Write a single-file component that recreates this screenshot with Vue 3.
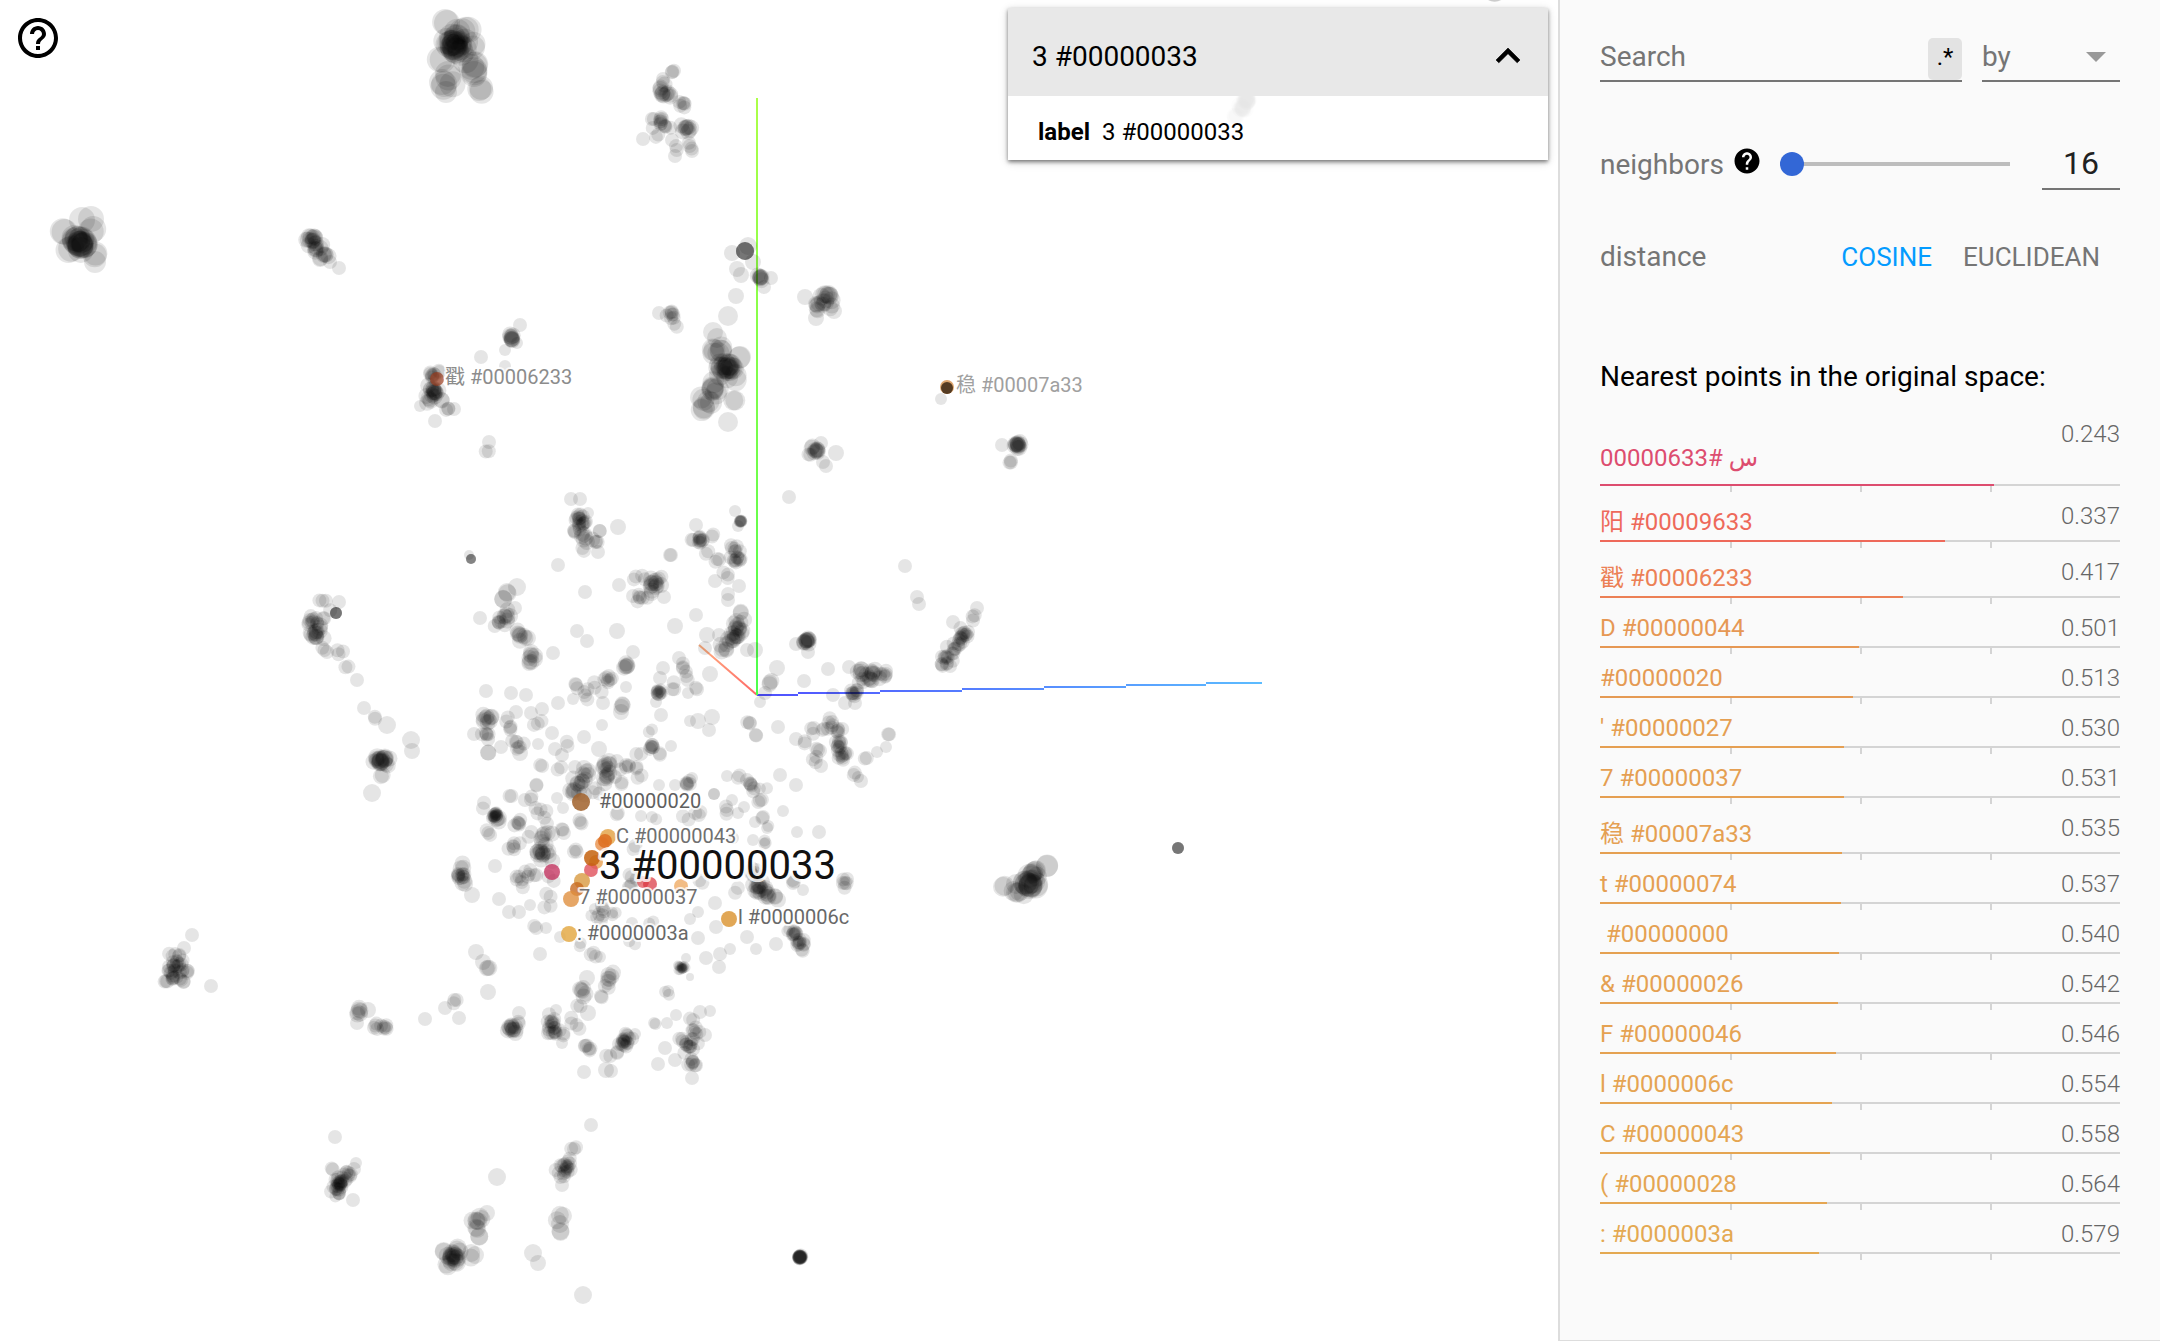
<script setup>
import { ref } from 'vue'

const pattern = ref('')
const neighborCount = ref(16)
const distance = ref('cosine')
const isOpen = ref(true)

const neighbors = [
  { label: 'س #00000633', value: 0.243, color: '#dd4d6f', script: 'arabic' },
  { label: '阳 #00009633', value: 0.337, color: '#ee695a', script: 'han' },
  { label: '戳 #00006233', value: 0.417, color: '#ec8055', script: 'han' },
  { label: 'D #00000044', value: 0.501, color: '#e69854' },
  { label: '#00000020', value: 0.513, color: '#e59a54' },
  { label: "' #00000027", value: 0.53, color: '#e59f52' },
  { label: '7 #00000037', value: 0.531, color: '#e59f52' },
  { label: '稳 #00007a33', value: 0.535, color: '#e5a052', script: 'han' },
  { label: 't #00000074', value: 0.537, color: '#e5a052' },
  { label: '\u00a0#00000000', value: 0.54, color: '#e5a152' },
  { label: '& #00000026', value: 0.542, color: '#e5a152' },
  { label: 'F #00000046', value: 0.546, color: '#e5a252' },
  { label: 'l #0000006c', value: 0.554, color: '#e5a452' },
  { label: 'C #00000043', value: 0.558, color: '#e5a552' },
  { label: '( #00000028', value: 0.564, color: '#e5a652' },
  { label: ': #0000003a', value: 0.579, color: '#e4a952' },
]

// Point groups of the projection: x y radius count spread
const groups = `
446 22 13 2 2;466 30 13 2 3;455 46 13 14 5;454 36 13 5 6;473 68 13 5 4;448 81 13 4 4;480 88 12 3 2;446 92 11 1 0;441 58 13 2 3;472 46 12 2 3;
673 73 7 3 2;661 80 7 2 2;665 92 8 9 4;682 105 7 4 3;658 122 7 8 5;668 127 7 3 3;685 128 8 7 4;643 139 7 1 0;656 134 7 2 2;672 140 7 1 0;677 147 7 2 2;675 156 7 1 0;689 146 7 3 3;692 151 7 1 0;
80 243 13 14 4;63 233 13 2 2;82 220 13 1 0;91 219 13 1 0;94 231 13 2 2;95 254 12 2 1;95 262 11 1 0;69 248 13 2 3;
312 240 8 10 3;317 248 8 6 3;324 255 8 5 3;339 268 7 1 0;330 262 7 1 0;
511 338 8 7 2;520 325 7 1 0;505 350 6 1 0;517 343 6 1 0;481 357 7 1 0;505 366 6 1 0;
435 374 7 8 4;433 390 8 10 4;429 400 8 5 4;420 406 6 1 0;448 409 7 3 2;454 409 7 1 0;435 421 7 1 0;441 399 8 2 2;
489 442 7 1 0;487 451 7 2 1;659 313 7 1 0;672 316 7 6 3;677 324 7 2 2;
745 251 9 7 0;732 253 8 1 0;748 246 9 1 0;753 262 8 1 0;737 269 8 1 0;741 275 8 1 0;760 277 8 6 2;771 278 7 1 0;764 287 7 1 0;736 296 8 1 0;728 316 10 1 0;
713 332 10 1 0;717 338 10 1 0;717 350 11 5 4;724 368 11 14 5;739 357 11 2 1;737 378 11 2 2;715 388 11 5 4;701 397 11 2 2;703 409 11 3 2;707 400 11 2 3;734 401 10 2 1;728 422 10 1 0;
805 297 8 1 0;826 297 9 8 4;819 308 8 5 3;816 318 8 1 0;834 311 8 1 0;831 307 8 2 2;
941 399 6 1 0;1017 445 8 10 2;1002 445 7 1 0;1011 462 7 3 1;
816 451 8 7 3;821 443 7 1 0;836 453 8 1 0;826 466 7 1 0;823 462 7 1 0;810 455 7 2 1;789 497 7 1 0;
741 521 6 6 1;735 511 6 1 0;738 526 6 1 0;700 539 7 7 2;696 525 7 1 0;692 539 7 2 1;711 535 7 2 2;707 551 7 2 2;735 549 7 5 4;737 560 7 7 4;719 560 7 3 3;730 575 7 3 4;715 581 7 1 0;739 586 7 1 0;728 594 7 1 0;728 600 7 1 0;
740 612 8 2 1;738 624 8 6 4;733 637 8 9 4;741 630 8 3 3;723 648 8 4 4;707 635 8 1 0;705 648 7 1 0;747 650 7 1 0;755 650 8 1 0;719 635 7 1 0;
807 641 8 9 2;796 644 7 1 0;808 652 7 1 0;696 615 7 1 0;675 626 8 1 0;670 555 7 1 0;777 668 8 1 0;770 684 8 3 2;765 693 7 1 0;760 702 6 1 0;710 674 8 1 0;
804 681 7 1 0;828 669 7 1 0;849 667 7 1 0;872 675 8 9 5;862 673 8 4 3;885 673 7 4 3;854 693 7 7 3;862 683 7 3 3;833 695 7 1 0;845 703 7 1 0;855 703 7 1 0;
905 566 7 1 0;917 597 7 1 0;919 604 7 1 0;977 608 7 1 0;974 618 7 3 2;953 622 7 1 0;964 633 7 7 3;958 642 7 6 4;953 650 7 5 4;945 659 7 8 4;941 665 7 2 1;
748 723 7 3 2;756 735 7 2 1;778 727 7 1 0;712 717 8 1 0;698 721 8 1 0;690 721 6 1 0;709 730 7 1 0;
828 725 7 5 5;836 735 7 7 6;843 757 7 7 4;838 747 7 4 4;812 728 7 3 4;796 739 7 1 0;805 742 7 2 2;820 750 7 3 3;814 760 7 3 3;821 766 7 1 0;854 772 7 2 2;861 781 7 1 0;858 777 6 1 0;866 759 7 2 1;877 752 6 1 0;886 747 6 1 0;889 735 7 2 1;
1178 848 6 7 0;796 785 7 1 0;780 775 7 1 0;1030 882 12 11 5;1047 866 11 2 1;1003 886 10 2 2;1021 892 10 4 5;1036 874 10 4 4;845 883 7 4 3;
571 499 7 1 0;580 499 7 1 0;578 515 7 6 4;581 523 7 8 4;573 532 7 3 2;585 538 8 5 4;599 532 7 2 2;598 542 7 3 4;598 552 7 1 0;583 548 7 2 2;588 513 6 1 0;
618 527 8 1 0;558 565 7 1 0;671 555 7 1 0;585 592 7 1 0;619 585 7 1 0;471 559 5 6 0;469 555 5 1 0;
653 585 8 10 4;635 578 7 2 2;642 598 7 4 4;660 577 7 2 2;664 597 7 1 0;643 577 7 2 2;633 596 7 1 0;
336 613 6 7 0;339 602 7 1 0;323 603 7 3 4;312 620 7 8 4;317 635 8 11 5;327 615 7 3 5;323 650 7 3 3;338 653 7 3 3;347 667 7 2 1;357 680 7 1 0;364 708 7 1 0;373 717 7 2 2;387 725 9 1 0;411 740 9 1 0;412 751 8 1 0;382 760 9 10 3;391 762 8 3 3;375 760 8 3 2;382 777 8 2 2;372 793 9 1 0;
517 587 9 1 0;507 593 9 2 2;502 600 9 2 2;507 615 8 5 5;498 623 7 5 4;515 608 7 1 0;517 635 8 5 4;527 637 8 2 2;531 658 8 6 3;531 652 8 1 0;480 618 7 1 0;553 653 7 1 0;577 631 7 1 0;587 641 7 1 0;617 631 8 1 0;
633 652 7 1 0;627 665 8 4 2;608 679 7 5 3;626 687 6 1 0;622 706 8 3 2;621 712 8 1 0;597 688 7 3 4;575 688 7 3 3;583 690 7 2 3;588 698 7 2 3;573 699 6 1 0;603 703 7 1 0;558 703 7 1 0;
682 672 7 4 6;663 668 7 1 0;660 678 7 1 0;679 658 7 1 0;659 692 6 7 2;660 692 8 2 3;697 688 7 2 1;688 693 6 1 0;673 685 7 3 3;656 702 6 1 0;661 715 7 1 0;
486 691 7 1 0;511 693 7 1 0;526 695 7 1 0;488 718 8 7 4;485 737 7 4 4;474 734 7 1 0;488 753 8 2 1;501 747 7 1 0;508 720 7 2 2;516 712 7 1 0;512 728 7 3 3;518 742 7 5 4;520 753 8 1 0;542 709 7 1 0;531 713 7 1 0;537 723 7 3 4;552 733 7 1 0;538 744 6 1 0;584 737 7 1 0;602 725 6 1 0;
541 765 7 2 1;555 749 7 1 0;562 755 7 1 0;568 745 7 2 4;560 768 7 2 3;575 767 7 1 0;599 749 8 1 0;650 730 6 2 3;652 747 7 5 2;660 752 7 2 2;640 753 7 2 3;671 746 6 1 0;
587 773 8 6 5;578 788 8 9 5;607 767 8 7 4;608 778 8 4 4;625 765 7 4 5;618 782 7 3 3;637 767 7 2 3;640 777 7 2 2;593 790 7 3 4;659 785 6 1 0;687 783 7 4 4;675 785 6 1 0;692 778 6 1 0;698 813 7 3 3;682 817 7 2 4;714 794 6 1 0;
538 785 7 2 2;509 796 7 2 2;528 799 7 3 3;495 816 6 10 2;496 818 8 4 5;485 808 7 2 3;490 832 7 3 4;519 823 7 4 3;543 813 7 4 6;557 798 6 1 0;563 808 6 1 0;582 822 7 3 3;514 847 7 4 4;543 852 8 12 6;545 837 8 4 4;530 833 7 2 3;562 830 7 3 5;577 852 7 3 4;618 813 7 2 4;641 816 6 1 0;655 822 6 2 4;
727 776 6 1 0;738 777 7 2 2;752 785 7 5 4;762 787 6 2 3;760 801 7 3 2;714 794 6 1 0;727 810 7 3 3;732 800 6 1 0;744 807 6 1 0;738 813 6 1 0;783 811 6 1 0;763 817 7 2 2;755 822 6 1 0;768 827 6 2 2;763 842 6 3 3;753 840 6 1 0;797 832 6 1 0;819 832 7 1 0;733 838 6 1 0;
495 866 7 1 0;520 880 7 4 5;530 875 7 4 5;553 878 7 2 3;461 875 7 8 3;460 865 8 3 3;463 882 8 3 3;472 895 8 1 0;499 899 7 1 0;509 912 7 1 0;519 912 7 1 0;530 905 6 1 0;547 897 7 2 3;548 907 7 2 3;535 926 7 2 3;546 928 6 1 0;540 954 7 1 0;
632 850 7 2 4;630 880 7 4 6;602 913 7 5 4;613 914 6 3 4;592 912 6 2 3;632 943 6 2 4;632 923 6 1 0;560 937 6 1 0;583 942 6 2 3;593 955 7 3 3;600 957 6 1 0;653 927 6 2 4;
698 912 6 1 0;690 919 6 1 0;715 903 7 1 0;716 927 7 1 0;698 938 7 1 0;735 890 7 2 3;702 882 7 2 4;759 888 8 10 4;766 895 8 5 3;777 898 8 3 3;753 873 7 4 4;795 883 7 3 3;803 890 6 1 0;
795 933 7 6 3;800 942 7 7 3;788 930 6 2 2;803 951 7 2 1;776 944 7 1 0;756 949 6 1 0;747 937 7 1 0;730 949 6 1 0;720 954 7 1 0;719 967 7 1 0;706 958 7 1 0;682 968 5 12 2;686 958 5 1 0;690 977 4 1 0;
476 952 8 1 0;483 962 8 1 0;488 968 8 3 1;488 992 8 1 0;455 1002 7 3 3;445 1008 7 1 0;459 1018 7 1 0;519 1013 7 1 0;512 1028 8 9 3;520 1023 7 2 2;
550 1020 7 6 4;554 1031 7 9 4;563 1032 7 2 3;562 1043 6 1 0;556 1010 6 1 0;570 1022 7 2 3;578 1025 7 2 3;588 1013 8 1 0;578 1003 7 2 3;584 990 8 4 4;587 978 8 1 0;608 977 8 4 3;602 997 7 2 2;607 987 7 2 2;668 993 6 3 3;
587 1047 7 4 3;584 1072 7 1 0;607 1057 7 2 3;606 1070 8 1 0;611 1071 7 1 0;623 1043 7 9 3;628 1037 7 4 3;635 1034 6 1 0;619 1053 7 2 2;655 1024 6 2 1;667 1023 6 1 0;676 1015 6 1 0;700 1012 7 1 0;710 1011 6 1 0;
688 1023 7 2 4;693 1032 7 4 4;688 1047 7 9 5;682 1040 7 3 5;692 1063 7 6 3;692 1078 7 1 0;658 1064 7 1 0;665 1048 7 1 0;675 1060 7 1 0;705 1035 7 1 0;
192 935 7 1 0;184 948 7 1 0;177 960 7 10 5;175 973 7 14 5;165 982 7 3 2;182 980 7 3 3;188 970 7 3 3;211 986 7 1 0;
359 1012 8 4 2;368 1010 8 1 0;357 1023 7 1 0;382 1026 7 4 3;374 1026 7 2 2;386 1026 7 2 2;425 1019 7 1 0;335 1137 7 1 0;
332 1169 7 2 1;340 1181 7 14 4;337 1189 7 7 3;348 1174 7 4 3;356 1163 6 1 0;354 1169 7 1 0;338 1195 6 2 2;353 1200 7 1 0;
591 1125 7 1 0;574 1148 7 3 2;566 1167 7 9 4;561 1174 7 4 4;570 1160 7 2 2;562 1185 7 1 0;497 1177 9 1 0;487 1213 8 1 0;478 1220 9 4 3;479 1237 9 2 1;477 1228 9 2 1;
453 1257 9 13 4;443 1252 9 2 1;459 1247 9 2 2;447 1267 9 2 2;470 1255 9 2 2;475 1255 9 1 0;561 1215 9 2 2;559 1223 9 2 2;559 1235 9 2 3;533 1253 9 1 0;538 1263 8 1 0;583 1295 9 1 0;800 1257 7 12 1;
1247 100 8 14 2;1242 108 8 9 2;1235 116 8 3 2;1494 -11 13 2 1`

// Small seeded generator so that the cloud looks the same on every load
let seed = 7
const random = () => {
  seed = (seed * 16807) % 2147483647
  return seed / 2147483647
}
const jitter = () => (random() + random() + random() - 1.5) * 1.5

const points = groups.split(';').flatMap((group) => {
  const [x, y, r, count, spread] = group.trim().split(/\s+/).map(Number)
  const total = count > 3 && spread ? Math.round(count * 1.4) : count
  return Array.from({ length: total }, () => ({
    x: (x + jitter() * spread).toFixed(1),
    y: (y + jitter() * spread).toFixed(1),
    r,
  }))
})

const marked = [
  { x: 437, y: 379, r: 7, color: '#a23c1c', opacity: 0.65 },
  { x: 947, y: 387, r: 7, color: '#d08030', opacity: 0.7 },
  { x: 947, y: 388, r: 6, color: '#46301a', opacity: 0.9 },
  { x: 581, y: 802, r: 9, color: '#a0602a', opacity: 0.85 },
  { x: 608, y: 837, r: 8, color: '#e2a040', opacity: 0.8 },
  { x: 602, y: 844, r: 7, color: '#e8904a', opacity: 0.8 },
  { x: 605, y: 841, r: 7, color: '#dc6a1c', opacity: 0.8 },
  { x: 596, y: 862, r: 7, color: '#e8a050', opacity: 0.8 },
  { x: 591, y: 870, r: 7, color: '#e0505a', opacity: 0.8 },
  { x: 592, y: 858, r: 8, color: '#c4620e', opacity: 0.85 },
  { x: 552, y: 872, r: 8, color: '#c22a58', opacity: 0.75 },
  { x: 582, y: 881, r: 8, color: '#d89a40', opacity: 0.8 },
  { x: 577, y: 889, r: 7, color: '#c86a20', opacity: 0.8 },
  { x: 571, y: 899, r: 8, color: '#e09040', opacity: 0.8 },
  { x: 569, y: 934, r: 8, color: '#e4aa48', opacity: 0.85 },
  { x: 729, y: 919, r: 8, color: '#dc9838', opacity: 0.85 },
  { x: 643, y: 882, r: 6, color: '#e04a50', opacity: 0.7 },
  { x: 650, y: 884, r: 7, color: '#d8303c', opacity: 0.7 },
  { x: 681, y: 886, r: 7, color: '#eda050', opacity: 0.7 },
]

const sceneLabels = [
  { x: 445, y: 384, text: '戳 #00006233', color: '#8c8c8c' },
  { x: 956, y: 392, text: '稳 #00007a33', color: '#a0a0a0' },
  { x: 599, y: 808, text: '#00000020', color: '#606060' },
  { x: 616, y: 843, text: 'C #00000043', color: '#707070' },
  { x: 579, y: 904, text: '7 #00000037', color: '#707070' },
  { x: 738, y: 924, text: 'l #0000006c', color: '#686868' },
  { x: 577, y: 940, text: ': #0000003a', color: '#686868' },
]
</script>

<template>
  <div class="projector">
    <main class="stage">
      <svg class="scene" viewBox="0 0 1558 1341" preserveAspectRatio="xMinYMin meet">
        <defs>
          <linearGradient id="axis-y" gradientUnits="userSpaceOnUse" x1="757" y1="98" x2="757" y2="694">
            <stop offset="0" stop-color="#acff48" />
            <stop offset="1" stop-color="#4cff4c" />
          </linearGradient>
          <linearGradient id="axis-x" gradientUnits="userSpaceOnUse" x1="757" y1="695" x2="1262" y2="683">
            <stop offset="0" stop-color="#5050ff" />
            <stop offset="1" stop-color="#5cbcff" />
          </linearGradient>
          <linearGradient id="axis-z" gradientUnits="userSpaceOnUse" x1="757" y1="694" x2="699" y2="644">
            <stop offset="0" stop-color="#ff6666" />
            <stop offset="1" stop-color="#ffb080" />
          </linearGradient>
        </defs>
        <path
          d="M757 695H798M798 693H880M880 691H962M962 689H1044M1044 687H1126M1126 685H1206M1206 683H1262"
          stroke="url(#axis-x)" stroke-width="2"
        />
        <path d="M757 695L699 645" stroke="url(#axis-z)" stroke-width="2" />
        <path d="M756 98h2v597h-2z" fill="url(#axis-y)" />
        <g class="points">
          <circle v-for="(p, i) in points" :key="i" :cx="p.x" :cy="p.y" :r="p.r" />
        </g>
        <circle
          v-for="(m, i) in marked" :key="'m' + i"
          :cx="m.x" :cy="m.y" :r="m.r" :fill="m.color" :fill-opacity="m.opacity"
        />
        <text
          v-for="l in sceneLabels" :key="l.text"
          class="point-label" :x="l.x" :y="l.y" :fill="l.color"
        >{{ l.text }}</text>
        <text class="point-label selected" x="599" y="879">3 #00000033</text>
      </svg>

      <button class="help" type="button" aria-label="Help">
        <svg viewBox="0 0 24 24" width="48" height="48">
          <path d="M11 18h2v-2h-2v2zm1-16C6.480 2 2 6.480 2 12s4.480 10 10 10 10-4.480 10-10S17.520 2 12 2zm0 18c-4.410 0-8-3.590-8-8s3.590-8 8-8 8 3.590 8 8-3.590 8-8 8zm0-14c-2.210 0-4 1.790-4 4h2c0-1.100.900-2 2-2s2 .900 2 2c0 2-3 1.750-3 5h2c0-2.250 3-2.500 3-5 0-2.210-1.790-4-4-4z" />
        </svg>
      </button>

      <section class="metadata">
        <header class="metadata-head">
          <span>3 #00000033</span>
          <button class="toggle" type="button" aria-label="Toggle details" @click="isOpen = !isOpen">
            <svg viewBox="0 0 24 24" width="48" height="48">
              <path d="M12 8l-6 6 1.410 1.410L12 10.830l4.590 4.580L18 14z" stroke="#000" stroke-width=".3" />
            </svg>
          </button>
        </header>
        <dl v-if="isOpen" class="metadata-body">
          <dt>label</dt>
          <dd>3 #00000033</dd>
        </dl>
      </section>
    </main>

    <aside class="inspector">
      <div class="search-row">
        <div class="search">
          <input v-model="pattern" type="text" placeholder="Search" aria-label="Search" />
          <button class="regex" type="button" aria-label="Regular expression mode">.*</button>
        </div>
        <div class="search-by">
          <select aria-label="Search by">
            <option>by</option>
          </select>
          <svg class="caret" viewBox="0 0 20 10" width="20" height="10"><path d="M0 0h20L10 10z" /></svg>
        </div>
      </div>

      <div class="neighbors-row">
        <label for="neighbor-slider">neighbors</label>
        <svg class="hint" viewBox="0 0 24 24" width="30" height="30">
          <path d="M12 2C6.480 2 2 6.480 2 12s4.480 10 10 10 10-4.480 10-10S17.520 2 12 2zm1 17h-2v-2h2v2zm2.070-7.750l-.900.920C13.450 12.900 13 13.500 13 15h-2v-.500c0-1.100.450-2.100 1.170-2.830l1.240-1.260c.370-.360.590-.860.590-1.410 0-1.100-.900-2-2-2s-2 .900-2 2H8c0-2.210 1.790-4 4-4s4 1.790 4 4c0 .880-.360 1.680-.930 2.250z" />
        </svg>
        <input id="neighbor-slider" v-model="neighborCount" class="slider" type="range" min="16" max="999" />
        <input v-model="neighborCount" class="count" type="text" aria-label="Number of neighbors" />
      </div>

      <div class="distance-row">
        <span>distance</span>
        <div class="metrics">
          <button type="button" :class="{ active: distance === 'cosine' }" @click="distance = 'cosine'">COSINE</button>
          <button type="button" :class="{ active: distance === 'euclidean' }" @click="distance = 'euclidean'">EUCLIDEAN</button>
        </div>
      </div>

      <h2 class="heading">Nearest points in the original space:</h2>
      <ul class="list">
        <li v-for="n in neighbors" :key="n.label">
          <a href="#" class="neighbor" :class="n.script" :style="{ color: n.color }">
            <span class="name">{{ n.label }}</span>
            <span class="value">{{ n.value.toFixed(3) }}</span>
          </a>
          <div class="bar">
            <div class="fill" :style="{ width: (1 - n.value) * 100 + '%', background: n.color }"></div>
          </div>
          <div class="ticks"><i></i><i></i><i></i><i></i></div>
        </li>
      </ul>
    </aside>
  </div>
</template>

<style>
body {
  margin: 0;
  background: #fff;
}
</style>

<style scoped>
.projector {
  display: flex;
  min-height: 100vh;
  font-family: Roboto, "Noto Sans CJK SC", "DejaVu Sans", sans-serif;
  color: #000;
}
button,
input,
select {
  box-sizing: border-box;
  font: inherit;
  color: inherit;
  background: none;
  border: 0;
  padding: 0;
  margin: 0;
  outline: none;
}
svg {
  display: block;
}
.stage {
  position: relative;
  flex: 1;
  min-width: 0;
  overflow: hidden;
  background: #fff;
}
.scene {
  width: 100%;
}
.points {
  fill: #000;
  fill-opacity: 0.1;
}
.point-label {
  font-size: 20px;
  stroke: rgba(255, 255, 255, 0.8);
  stroke-width: 4px;
  stroke-linejoin: round;
  paint-order: stroke;
}
.point-label.selected {
  font-size: 40px;
  fill: #111;
  stroke-width: 6px;
}
.help {
  position: absolute;
  top: 14px;
  left: 14px;
}
.metadata {
  position: absolute;
  top: 8px;
  right: 10px;
  width: 540px;
  background: rgba(255, 255, 255, 0.9);
  box-shadow: 0 2px 4px rgba(0, 0, 0, 0.5), 0 2px 10px rgba(0, 0, 0, 0.12);
}
.metadata-head {
  box-sizing: border-box;
  display: flex;
  justify-content: space-between;
  align-items: center;
  height: 88px;
  padding: 8px 16px 0 24px;
  background: #e8e8e8;
  font-size: 28px;
}
.metadata-body {
  display: flex;
  gap: 12px;
  margin: 0;
  padding: 22px 30px 14px;
  font-size: 24px;
  line-height: 28px;
}
.metadata-body dt {
  font-weight: 700;
}
.metadata-body dd {
  margin: 0;
}
.inspector {
  box-sizing: border-box;
  flex: none;
  width: 602px;
  padding: 38px 40px 0;
  border-left: 2px solid #ddd;
  border-bottom: 1px solid #ddd;
  background: #fafafa;
  color: #757575;
  font-size: 28px;
}
.search-row {
  display: flex;
  gap: 20px;
}
.search {
  display: flex;
  flex: 1;
  min-width: 0;
  height: 42px;
  border-bottom: 2px solid #757575;
}
.search input {
  flex: 1;
  min-width: 0;
  padding-bottom: 6px;
}
.search input::placeholder {
  color: #757575;
  opacity: 1;
}
.regex {
  width: 34px;
  height: 42px;
  padding-bottom: 4px;
  border-radius: 5px;
  background: #e3e3e3;
  color: #000;
  font-size: 24px;
}
.search-by {
  position: relative;
  flex: none;
  width: 138px;
  height: 42px;
  border-bottom: 2px solid #757575;
}
.search-by select {
  appearance: none;
  width: 100%;
  height: 100%;
  padding-bottom: 6px;
}
.caret {
  position: absolute;
  top: 14px;
  right: 14px;
  fill: #999;
  pointer-events: none;
}
.neighbors-row {
  display: flex;
  align-items: center;
  margin-top: 56px;
}
.neighbors-row label {
  width: 132px;
}
.hint {
  fill: #000;
  margin-bottom: 6px;
}
.slider {
  appearance: none;
  flex: 1;
  min-width: 0;
  height: 24px;
  margin: 0 32px 0 18px;
}
.slider::-webkit-slider-runnable-track {
  height: 4px;
  background: #bdbdbd;
}
.slider::-webkit-slider-thumb {
  appearance: none;
  width: 24px;
  height: 24px;
  margin-top: -10px;
  border-radius: 50%;
  background: #3367d6;
}
.count {
  width: 78px;
  height: 52px;
  border-bottom: 2px solid #757575;
  color: #212121;
  font-size: 32px;
  text-align: center;
}
.distance-row {
  display: flex;
  justify-content: space-between;
  align-items: center;
  margin-top: 50px;
  line-height: 34px;
}
.metrics {
  display: flex;
  gap: 31px;
  padding-right: 20px;
  font-size: 26px;
}
.metrics .active {
  color: #039bff;
}
.heading {
  margin: 86px 0 26px;
  color: #000;
  font-size: 28px;
  font-weight: 400;
  line-height: 34px;
}
.list {
  margin: 0;
  padding: 0;
  list-style: none;
  font-size: 24px;
  line-height: 28px;
}
.list li {
  padding-bottom: 10px;
}
.neighbor {
  display: flex;
  justify-content: space-between;
  align-items: flex-start;
  height: 28px;
  padding-bottom: 4px;
  text-decoration: none;
}
.neighbor .name {
  align-self: flex-end;
}
.neighbor.han {
  height: 34px;
}
.neighbor.arabic {
  height: 60px;
}
.neighbor.arabic .name {
  line-height: 44px;
}
.value {
  color: #666;
  font-weight: 300;
}
.bar {
  height: 2px;
  background: #d4d4d4;
}
.fill {
  height: 2px;
}
.ticks {
  display: flex;
  height: 6px;
}
.ticks i {
  box-sizing: border-box;
  width: 25%;
}
.ticks i + i {
  border-left: 2px solid #d4d4d4;
}
</style>
